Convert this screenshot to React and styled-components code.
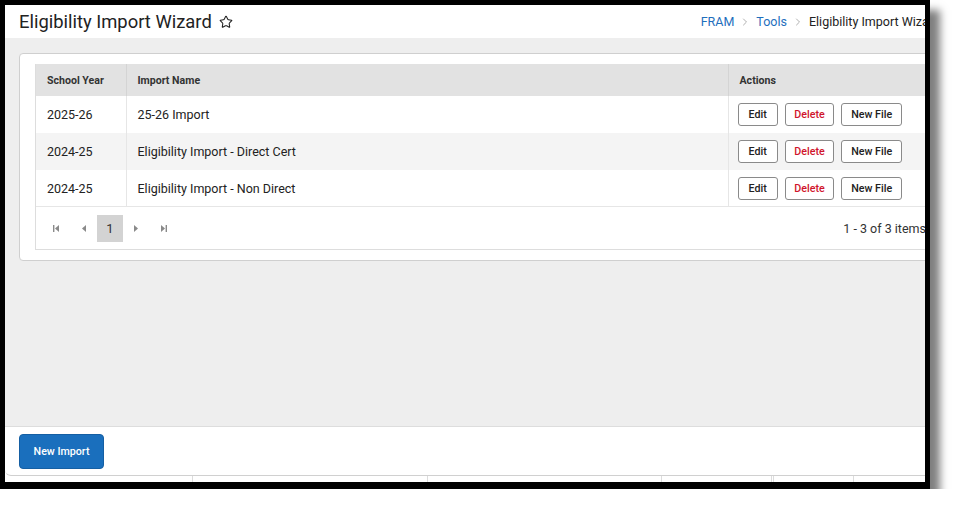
import React from 'react'
import styled, { createGlobalStyle } from 'styled-components'
import { Star, ChevronRight } from 'lucide-react'

const GlobalStyle = createGlobalStyle`
    html, body {
        margin: 0;
        padding: 0;
        background: #ffffff;
    }
    body {
        font-family: Roboto, 'Liberation Sans', sans-serif;
        color: #222222;
    }
`

const Frame = styled.div`
    width: 920px;
    height: 477px;
    border-style: solid;
    border-color: #000000;
    border-width: 5px 5px 7px 5px;
    box-shadow: 10px 10px 8px rgba(0, 0, 0, 0.5);
    overflow: hidden;
`
const Screen = styled.div`
    width: 968px;
    height: 100%;
    display: flex;
    flex-direction: column;
`
const Header = styled.header`
    height: 33px;
    flex-shrink: 0;
    display: flex;
    align-items: center;
    justify-content: space-between;
    padding: 0 33px 0 14px;
    background: #ffffff;
`
const Title = styled.h1`
    margin: 0;
    display: flex;
    align-items: center;
    gap: 7px;
    font-size: 18.4px;
    font-weight: 400;
    color: #222222;
    svg {
        margin-top: 1px;
    }
`
const Crumbs = styled.nav`
    display: flex;
    align-items: center;
    gap: 5px;
    font-size: 12.5px;
    white-space: nowrap;
    svg {
        color: #b0b0b0;
    }
`
const Crumb = styled.span`
    color: ${(p) => (p.current ? '#222222' : '#1f6fbd')};
`
const Main = styled.main`
    flex: 1;
    background: #eeeeee;
    padding: 15px 14px 0 14px;
`
const Panel = styled.section`
    background: #ffffff;
    border: 1px solid #cfcfcf;
    border-radius: 4px;
    padding: 10px 15px 10px 15px;
`
const Grid = styled.div`
    border: 1px solid #dddddd;
    border-top: none;
`
const Table = styled.table`
    width: 100%;
    border-collapse: collapse;
    table-layout: fixed;
`
const Th = styled.th`
    height: 32px;
    padding: 0 11px;
    text-align: left;
    font-size: 10.6px;
    font-weight: 700;
    color: #333333;
    background: #e2e2e2;
    border-left: 1px solid #d4d4d4;
    &:first-child {
        border-left: none;
    }
`
const Row = styled.tr`
    height: ${(p) => p.h}px;
    background: ${(p) => (p.alt ? '#f4f4f4' : '#ffffff')};
`
const Td = styled.td`
    padding: 0 11px 0 ${(p) => p.pl || 11}px;
    font-size: 12.5px;
    color: #222222;
    border-left: 1px solid #e6e6e6;
    white-space: nowrap;
    &:first-child {
        border-left: none;
    }
`
const Actions = styled.div`
    display: flex;
    gap: 7px;
`
const Btn = styled.button`
    height: 23px;
    padding: 0 ${(p) => p.px || 9}px;
    background: #ffffff;
    border: 1px solid #8a8a8a;
    border-radius: 3px;
    font-family: Roboto, 'Liberation Sans', sans-serif;
    font-size: 10.7px;
    font-weight: 500;
    color: ${(p) => (p.danger ? '#d0142c' : '#222222')};
`
const Pager = styled.div`
    height: 42px;
    border-top: 1px solid #e6e6e6;
    display: flex;
    align-items: center;
    justify-content: space-between;
    padding: 0 16px 0 7px;
`
const PageNav = styled.div`
    display: flex;
    align-items: center;
`
const NavIcon = styled.span`
    width: 27px;
    height: 27px;
    display: flex;
    align-items: center;
    justify-content: center;
    color: #8a8a8a;
`
const PageNum = styled.span`
    width: 26px;
    height: 27px;
    display: flex;
    align-items: center;
    justify-content: center;
    background: #d3d3d3;
    font-size: 13px;
    color: #333333;
`
const Count = styled.span`
    font-size: 12.5px;
    color: #333333;
    white-space: nowrap;
`
const Footer = styled.footer`
    height: 50px;
    flex-shrink: 0;
    box-sizing: border-box;
    background: #ffffff;
    border-top: 1px solid #dddddd;
    border-bottom: 1px solid #d0d0d0;
    border-radius: 0 0 6px 6px;
    display: flex;
    align-items: center;
    padding: 0 14px;
`
const PrimaryBtn = styled.button`
    width: 85px;
    height: 35px;
    background: #1a6fbd;
    border: 1px solid #155fa3;
    border-radius: 4px;
    color: #ffffff;
    font-family: Roboto, 'Liberation Sans', sans-serif;
    font-size: 10.7px;
    font-weight: 500;
`
const Strip = styled.div`
    height: 6px;
    flex-shrink: 0;
    display: grid;
    grid-template-columns: 188px 235px 234px 110px 2px 80px 1fr;
    background: #ffffff;
    span {
        border-right: 1px solid #dcdcdc;
    }
`

const Tri = ({ dir, bar }) => (
    <svg width="9" height="9" viewBox="0 0 9 9">
        {dir === 'left' ? (
            <>
                <path d="M7 1 L3 4.5 L7 8 Z" fill="currentColor" />
                {bar && <rect x="1" y="1" width="1.4" height="7" fill="currentColor" />}
            </>
        ) : (
            <>
                <path d="M2 1 L6 4.5 L2 8 Z" fill="currentColor" />
                {bar && <rect x="6.6" y="1" width="1.4" height="7" fill="currentColor" />}
            </>
        )}
    </svg>
)

const rows = [
    { year: '2025-26', name: '25-26 Import', h: 37 },
    { year: '2024-25', name: 'Eligibility Import - Direct Cert', h: 37 },
    { year: '2024-25', name: 'Eligibility Import - Non Direct', h: 36 },
]

const App = () => (
    <>
        <GlobalStyle />
        <Frame>
            <Screen>
                <Header>
                    <Title>
                        Eligibility Import Wizard
                        <Star size={14} strokeWidth={1.8} />
                    </Title>
                    <Crumbs>
                        <Crumb>FRAM</Crumb>
                        <ChevronRight size={12} />
                        <Crumb>Tools</Crumb>
                        <ChevronRight size={12} />
                        <Crumb current>Eligibility Import Wizard</Crumb>
                    </Crumbs>
                </Header>
                <Main>
                    <Panel>
                        <Grid>
                            <Table>
                                <colgroup>
                                    <col style={{ width: '90px' }} />
                                    <col style={{ width: '602px' }} />
                                    <col />
                                </colgroup>
                                <thead>
                                    <tr>
                                        <Th>School Year</Th>
                                        <Th>Import Name</Th>
                                        <Th>Actions</Th>
                                    </tr>
                                </thead>
                                <tbody>
                                    {rows.map((r, i) => (
                                        <Row key={i} h={r.h} alt={i === 1}>
                                            <Td>{r.year}</Td>
                                            <Td>{r.name}</Td>
                                            <Td pl={9}>
                                                <Actions>
                                                    <Btn px={10}>Edit</Btn>
                                                    <Btn danger px={8.5}>Delete</Btn>
                                                    <Btn>New File</Btn>
                                                </Actions>
                                            </Td>
                                        </Row>
                                    ))}
                                </tbody>
                            </Table>
                            <Pager>
                                <PageNav>
                                    <NavIcon><Tri dir="left" bar /></NavIcon>
                                    <NavIcon><Tri dir="left" /></NavIcon>
                                    <PageNum>1</PageNum>
                                    <NavIcon><Tri dir="right" /></NavIcon>
                                    <NavIcon><Tri dir="right" bar /></NavIcon>
                                </PageNav>
                                <Count>1 - 3 of 3 items</Count>
                            </Pager>
                        </Grid>
                    </Panel>
                </Main>
                <Footer>
                    <PrimaryBtn>New Import</PrimaryBtn>
                </Footer>
                <Strip>
                    <span />
                    <span />
                    <span />
                    <span />
                    <span />
                    <span />
                    <span />
                </Strip>
            </Screen>
        </Frame>
    </>
)

export default App
